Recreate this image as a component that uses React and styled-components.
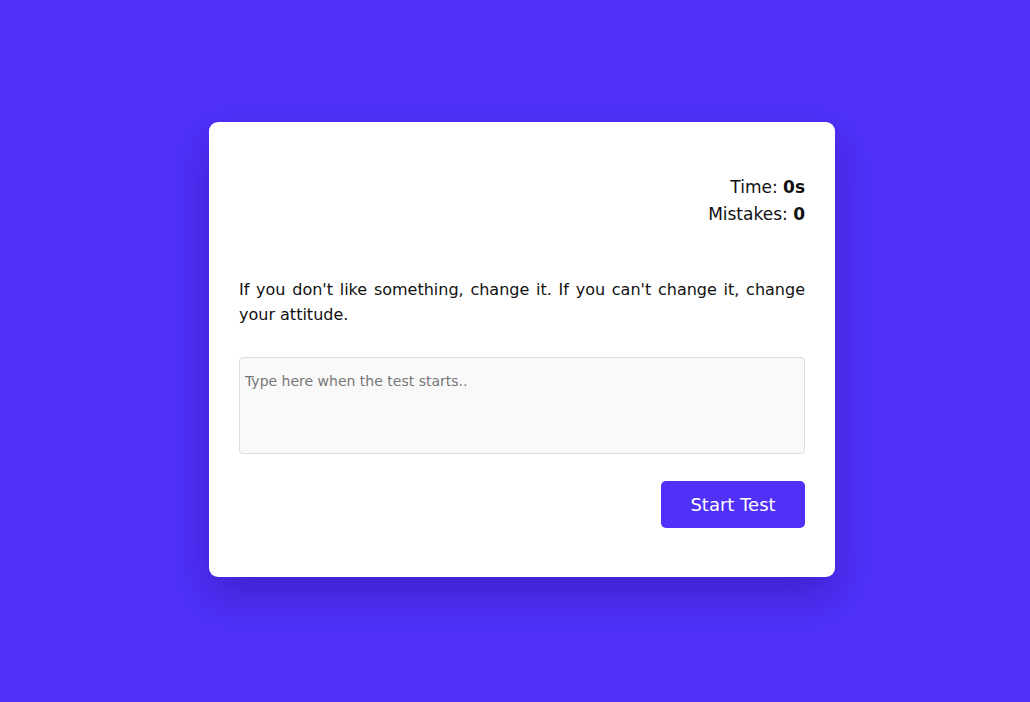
import React from "react";
import styled, { createGlobalStyle } from "styled-components";

const Global = createGlobalStyle`
  html, body { margin: 0; padding: 0; }
  body {
    background: #4f31f9;
    font-family: "DejaVu Sans", "Liberation Sans", sans-serif;
    color: #111;
  }
`;

const Page = styled.main`
  width: 1030px;
  height: 702px;
  display: flex;
  align-items: center;
  justify-content: center;
  box-sizing: border-box;
  padding: 0 0 4px 14px;
`;

const Card = styled.section`
  width: 626px;
  height: 455px;
  box-sizing: border-box;
  background: #fff;
  border-radius: 9px;
  padding: 52px 30px 48px;
  box-shadow: 0 18px 40px rgba(30, 10, 120, 0.35);
  display: flex;
  flex-direction: column;
`;

const Stats = styled.div`
  text-align: right;
  font-size: 17px;
  line-height: 27px;
  color: #111;
`;

const Stat = styled.div`
  b { font-weight: 700; }
`;

const Quote = styled.p`
  margin: 49px 0 0;
  font-size: 16px;
  line-height: 25px;
  text-align: justify;
  color: #111;
`;

const Input = styled.textarea`
  margin-top: 30px;
  height: 97px;
  box-sizing: border-box;
  width: 100%;
  resize: none;
  border: 1px solid #dddddd;
  border-radius: 4px;
  background: #f9f9f9;
  padding: 12px 5px;
  font-family: inherit;
  font-size: 14px;
  line-height: 22px;
  outline: none;
  &::placeholder { color: #777; }
`;

const Actions = styled.div`
  margin-top: 27px;
  display: flex;
  justify-content: flex-end;
`;

const Button = styled.button`
  width: 144px;
  height: 47px;
  border: none;
  border-radius: 5px;
  background: #4f31f9;
  color: #fff;
  font-family: inherit;
  font-size: 18px;
  cursor: pointer;
`;

export default function App() {
  return (
    <>
      <Global />
      <Page>
        <Card>
          <Stats>
            <Stat>Time: <b>0s</b></Stat>
            <Stat>Mistakes: <b>0</b></Stat>
          </Stats>
          <Quote>
            If you don't like something, change it. If you can't change it, change your attitude.
          </Quote>
          <Input placeholder="Type here when the test starts.." />
          <Actions>
            <Button>Start Test</Button>
          </Actions>
        </Card>
      </Page>
    </>
  );
}
